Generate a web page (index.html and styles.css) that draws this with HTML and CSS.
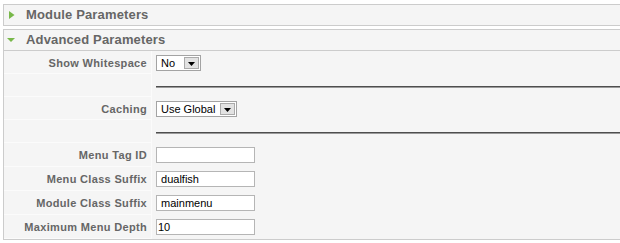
FILE: index.html
```html
<!DOCTYPE html>
<html>
<head>
<meta charset="utf-8">
<title>Parameters</title>
<link rel="stylesheet" href="styles.css">
</head>
<body>
<div class="panes">
  <div class="panel">
    <h3 class="title">
      <svg class="toggle" width="22" height="20" viewBox="0 0 22 20"><polygon points="5,6 10.5,10 5,14" fill="#78b84a"/></svg>
      <span>Module Parameters</span>
    </h3>
  </div>
  <div class="panel">
    <h3 class="title title-open">
      <svg class="toggle" width="22" height="20" viewBox="0 0 22 20"><polygon points="3,8 11,8 7,12" fill="#78b84a"/></svg>
      <span>Advanced Parameters</span>
    </h3>
    <div class="params">
      <div class="row row-s">
        <div class="key">Show Whitespace</div>
        <div class="val">
          <span class="select sel-no"><span class="sel-text">No</span><span class="sel-btn"><svg width="7" height="4" viewBox="0 0 7 4"><polygon points="0,0 7,0 3.5,4" fill="#000"/></svg></span></span>
        </div>
      </div>
      <div class="row row-s">
        <div class="key"></div>
        <div class="val"><hr class="sep"></div>
      </div>
      <div class="row row-s">
        <div class="key">Caching</div>
        <div class="val">
          <span class="select sel-global"><span class="sel-text">Use Global</span><span class="sel-btn"><svg width="7" height="4" viewBox="0 0 7 4"><polygon points="0,0 7,0 3.5,4" fill="#000"/></svg></span></span>
        </div>
      </div>
      <div class="row row-s">
        <div class="key"></div>
        <div class="val"><hr class="sep"></div>
      </div>
      <div class="row row-t">
        <div class="key">Menu Tag ID</div>
        <div class="val"><input class="text" type="text" value=""></div>
      </div>
      <div class="row row-t">
        <div class="key">Menu Class Suffix</div>
        <div class="val"><input class="text" type="text" value=" dualfish"></div>
      </div>
      <div class="row row-t">
        <div class="key">Module Class Suffix</div>
        <div class="val"><input class="text" type="text" value=" mainmenu"></div>
      </div>
      <div class="row row-t">
        <div class="key">Maximum Menu Depth</div>
        <div class="val"><input class="text" type="text" value="10"></div>
      </div>
    </div>
  </div>
</div>
</body>
</html>
```
FILE: styles.css
```css
html, body {
  margin: 0;
  padding: 0;
  background: #fff;
}
body {
  font-family: "Liberation Sans", Arial, sans-serif;
  font-size: 11px;
}
.panes {
  padding-top: 4px;
  margin-left: 3px;
}
.panel {
  border: 1px solid #cccccc;
  border-right: 0;
  background: #f5f5f5;
}
.panel + .panel {
  margin-top: 3px;
}
.title {
  margin: 0;
  height: 20px;
  display: flex;
  align-items: center;
  font-size: 13px;
  font-weight: bold;
  line-height: 20px;
  letter-spacing: 0.15px;
  color: #666;
}
.title-open {
  border-bottom: 1px solid #cccccc;
}
.toggle {
  display: block;
  flex: none;
}
.params {
  display: flex;
  flex-direction: column;
}
.row {
  display: grid;
  grid-template-columns: 148px 1fr;
}
.row-s { height: 23px; }
.row-t { height: 24px; }
.key {
  box-sizing: border-box;
  text-align: right;
  padding: 6px 4px 0 0;
  line-height: 13px;
  font-weight: bold;
  letter-spacing: 0.33px;
  color: #666;
  border-right: 1px solid #fbfbfb;
  border-bottom: 1px solid #fbfbfb;
  white-space: nowrap;
}
.val {
  padding: 4px 0 0 4px;
}
.sep {
  margin: 8px 0 0;
  height: 0;
  border: 0;
  border-top: 1px solid #4e4e4e;
  border-bottom: 1px solid #9a9a9a;
}
.select {
  box-sizing: border-box;
  display: inline-flex;
  height: 16px;
  border: 1px solid #a3a3a3;
  background: #fff;
  vertical-align: top;
}
.sel-no { width: 45px; }
.sel-global { width: 81px; }
.sel-text {
  flex: 1;
  padding-left: 4px;
  line-height: 15px;
  font-size: 11px;
  color: #000;
  white-space: nowrap;
}
.sel-btn {
  box-sizing: border-box;
  width: 15px;
  height: 12px;
  margin: 1px 1px 0 0;
  border: 1px solid #aaaaaa;
  background: #e2e2e2;
  display: flex;
  align-items: center;
  justify-content: center;
}
.sel-btn svg {
  display: block;
  margin-top: 1px;
}
.text {
  box-sizing: border-box;
  display: block;
  width: 99px;
  height: 16px;
  margin: 0;
  padding: 0 1px;
  border: 1px solid #b5b5b5;
  background: #fff;
  font-family: "Liberation Sans", Arial, sans-serif;
  font-size: 11px;
  color: #000;
  outline: none;
}
```
